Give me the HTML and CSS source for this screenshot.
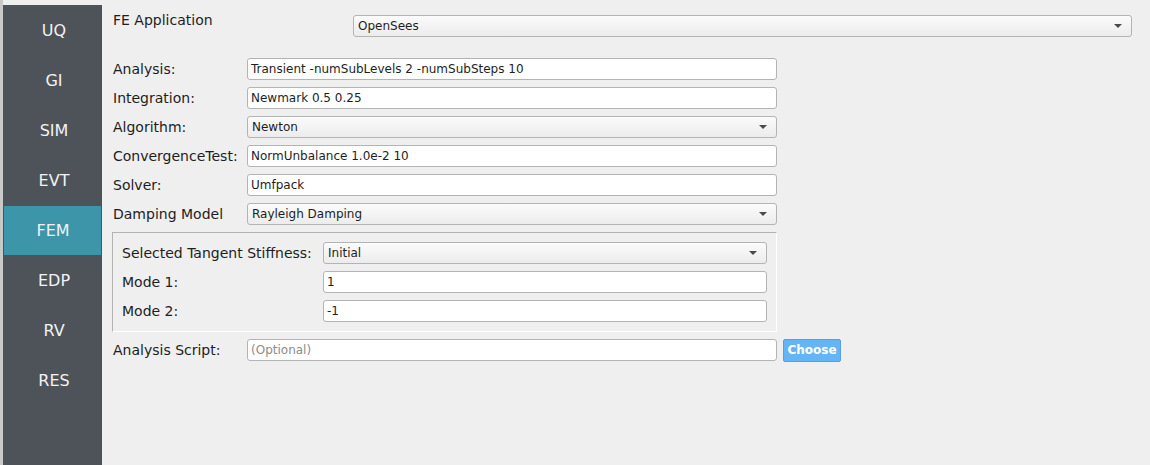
FILE: index.html
```html
<!DOCTYPE html>
<html>
<head>
<meta charset="utf-8">
<link rel="stylesheet" href="styles.css">
</head>
<body>
<div class="app">
  <div class="edge"></div>
  <nav class="sidebar">
    <div class="nav-item">UQ</div>
    <div class="nav-item">GI</div>
    <div class="nav-item">SIM</div>
    <div class="nav-item">EVT</div>
    <div class="nav-item active">FEM</div>
    <div class="nav-item">EDP</div>
    <div class="nav-item">RV</div>
    <div class="nav-item">RES</div>
  </nav>
  <main class="content">
    <div class="app-row">
      <span class="app-label">FE Application</span>
      <div class="combo wide"><span>OpenSees</span><span class="arrow"></span></div>
    </div>
    <div class="form">
      <div class="row"><span class="label">Analysis:</span><div class="field">Transient -numSubLevels 2 -numSubSteps 10</div></div>
      <div class="row"><span class="label">Integration:</span><div class="field">Newmark 0.5 0.25</div></div>
      <div class="row"><span class="label">Algorithm:</span><div class="combo"><span>Newton</span><span class="arrow"></span></div></div>
      <div class="row"><span class="label">ConvergenceTest:</span><div class="field">NormUnbalance 1.0e-2 10</div></div>
      <div class="row"><span class="label">Solver:</span><div class="field">Umfpack</div></div>
      <div class="row"><span class="label">Damping Model</span><div class="combo"><span>Rayleigh Damping</span><span class="arrow"></span></div></div>
      <div class="group">
        <div class="row"><span class="label glabel">Selected Tangent Stiffness:</span><div class="combo"><span>Initial</span><span class="arrow"></span></div></div>
        <div class="row"><span class="label glabel">Mode 1:</span><div class="field">1</div></div>
        <div class="row"><span class="label glabel">Mode 2:</span><div class="field">-1</div></div>
      </div>
      <div class="row script-row"><span class="label">Analysis Script:</span><div class="field placeholder">(Optional)</div><button class="choose">Choose</button></div>
    </div>
  </main>
</div>
</body>
</html>
```

FILE: styles.css
```css
html, body {
  margin: 0;
  padding: 0;
  background: #efefef;
  font-family: "DejaVu Sans", sans-serif;
  color: #1e1e1e;
  overflow: hidden;
}
.app {
  display: flex;
  width: 1150px;
  height: 465px;
}
.edge {
  width: 3px;
  background: #c9c9c9;
  flex: none;
}
.sidebar {
  width: 99px;
  margin-top: 5px;
  background: #4e5259;
  flex: none;
  display: flex;
  flex-direction: column;
}
.nav-item {
  height: 50px;
  display: flex;
  align-items: center;
  justify-content: center;
  padding-left: 3px;
  color: #f2f2f2;
  font-size: 16px;
}
.nav-item.active {
  background: #3c95a9;
  margin: 1px 1px 0 1px;
  padding-left: 1px;
  height: 49px;
}
.content {
  flex: 1;
  padding: 11px 0 0 11px;
  font-size: 14px;
}
.app-row {
  display: flex;
  align-items: flex-start;
  height: 46px;
}
.app-label {
  width: 240px;
  padding-top: 1px;
}
.combo, .field {
  box-sizing: border-box;
  height: 22px;
  width: 530px;
  border: 1px solid #b4b4b4;
  border-radius: 3px;
  font-size: 12px;
  display: flex;
  align-items: center;
  padding: 0 3px;
}
.app-row .combo {
  margin-top: 4px;
}
.combo {
  background: linear-gradient(#fbfbfb, #ececec);
  justify-content: space-between;
  padding-left: 4px;
  padding-right: 9px;
}
.combo.wide {
  width: 779px;
}
.field {
  background: #ffffff;
}
.placeholder {
  color: #8c8c8c;
}
.arrow {
  width: 0;
  height: 0;
  border-left: 4px solid transparent;
  border-right: 4px solid transparent;
  border-top: 4px solid #4a4a4a;
}
.form {
  display: flex;
  flex-direction: column;
  gap: 7px;
  margin-top: 1px;
}
.row {
  display: flex;
  align-items: center;
  height: 22px;
}
.label {
  width: 134px;
  flex: none;
}
.group {
  box-sizing: border-box;
  width: 665px;
  margin-left: -1px;
  border-top: 1px solid #b3b3b3;
  border-left: 1px solid #b3b3b3;
  border-right: 1px solid #ffffff;
  border-bottom: 1px solid #ffffff;
  padding: 9px 9px 9px 9px;
  display: flex;
  flex-direction: column;
  gap: 7px;
}
.group .glabel {
  width: 201px;
}
.group .combo, .group .field {
  width: 444px;
}
.choose {
  margin-left: 6px;
  height: 23px;
  width: 58px;
  background: #64b5f6;
  border: 1px solid #5a9fd6;
  border-radius: 2px;
  color: #ffffff;
  font-family: "DejaVu Sans", sans-serif;
  font-weight: bold;
  font-size: 12px;
  padding: 0;
}
```
